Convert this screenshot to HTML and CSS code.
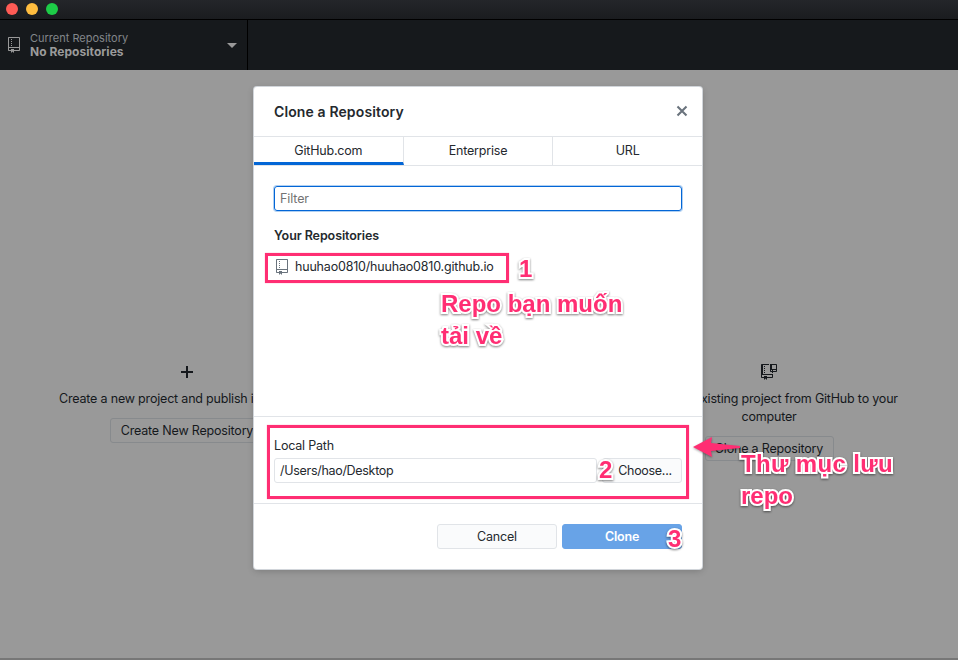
FILE: index.html
```html
<!DOCTYPE html>
<html lang="vi">
<head>
<meta charset="utf-8">
<title>GitHub Desktop</title>
<link rel="stylesheet" href="styles.css">
</head>
<body>
<div class="window">
  <header class="titlebar"><i class="light red"></i><i class="light yellow"></i><i class="light green"></i></header>
  <nav class="toolbar">
    <div class="repo-picker">
      <svg class="repo-icon" width="12" height="16" viewBox="0 0 12 16"><path fill="currentColor" fill-rule="evenodd" d="M4 9H3V8h1v1zm0-3H3v1h1V6zm0-2H3v1h1V4zm0-2H3v1h1V2zm8-1v12c0 .55-.45 1-1 1H6v2l-1.500-1.500L3 16v-2H1c-.55 0-1-.45-1-1V1c0-.55.45-1 1-1h10c.55 0 1 .45 1 1zm-1 10H1v2h2v-1h3v1h5v-2zm0-10H1v9h10V1z"/></svg>
      <div class="repo-label"><span class="current">Current Repository</span><b>No Repositories</b></div>
      <i class="caret"></i>
    </div>
  </nav>
  <main class="blank">
    <section class="option">
      <svg class="option-icon" width="14" height="14" viewBox="0 0 14 14"><path d="M7 1v12M1 7h12" stroke="currentColor" stroke-width="2"/></svg>
      <p class="create-text">Create a new project and publish it to GitHub</p>
      <button class="option-btn create-btn">Create New Repository</button>
    </section>
    <section class="option">
      <svg class="option-icon clone-icon" width="16" height="16" viewBox="0 0 16 16"><path fill="currentColor" fill-rule="evenodd" d="M15 0H9v7c0 .55.45 1 1 1h1v1h1V8h3c.55 0 1-.45 1-1V1c0-.55-.45-1-1-1zm-4 7h-1V6h1v1zm4 0h-3V6h3v1zm0-2h-4V1h4v4zM4 5H3V4h1v1zm0-2H3V2h1v1zM2 1h6V0H1C.45 0 0 .45 0 1v12c0 .55.45 1 1 1h2v2l1.500-1.500L6 16v-2h5c.55 0 1-.45 1-1v-3H2V1zm9 10v2H6v-1H3v1H1v-2h10zM3 8h1v1H3V8zm1-1H3V6h1v1z"/></svg>
      <p class="clone-text">Clone an existing project from GitHub to your<br>computer</p>
      <button class="option-btn clone-btn">Clone a Repository</button>
    </section>
  </main>
</div>

<div class="dialog">
  <header class="dialog-head"><h1>Clone a Repository</h1>
    <svg class="close" width="12" height="12" viewBox="0 0 12 12"><path d="M1.500 1.500l9 9M10.500 1.500l-9 9" stroke="currentColor" stroke-width="2.100"/></svg>
  </header>
  <div class="tabs"><span class="tab active">GitHub.com</span><span class="tab">Enterprise</span><span class="tab">URL</span></div>
  <div class="list">
    <div class="filter">Filter</div>
    <h2>Your Repositories</h2>
    <div class="repo-row">
      <svg width="12" height="16" viewBox="0 0 12 16"><path fill="currentColor" fill-rule="evenodd" d="M4 9H3V8h1v1zm0-3H3v1h1V6zm0-2H3v1h1V4zm0-2H3v1h1V2zm8-1v12c0 .55-.45 1-1 1H6v2l-1.500-1.500L3 16v-2H1c-.55 0-1-.45-1-1V1c0-.55.45-1 1-1h10c.55 0 1 .45 1 1zm-1 10H1v2h2v-1h3v1h5v-2zm0-10H1v9h10V1z"/></svg>
      <span>huuhao0810/huuhao0810.github.io</span>
    </div>
  </div>
  <div class="path">
    <label><span>Local Path</span></label>
    <div class="path-row"><div class="path-input"><span>/Users/hao/Desktop</span></div><button class="choose">Choose...</button></div>
  </div>
  <footer class="actions"><button class="cancel">Cancel</button><button class="primary">Clone</button></footer>
</div>

<div class="frame frame-repo"></div>
<div class="frame frame-path"></div>
<svg class="arrow" width="52" height="26" viewBox="0 0 52 26"><path d="M1 12L20 2l-1 6 29 3v2l-29 3 1 6z" fill="#ff2e73"/></svg>
<div class="note n1">1</div>
<div class="note n2">2</div>
<div class="note n3">3</div>
<div class="note n-repo"><span>Repo bạn muốn</span><br><span>tải về</span></div>
<div class="note n-path"><span class="wide">Thư mục lưu</span><br><span>repo</span></div>
</body>
</html>
```
FILE: styles.css
```css
* { box-sizing: border-box; }
body { margin: 0; width: 958px; height: 660px; overflow: hidden; position: relative; background: #999; color: #24292e; font: 12.5px/18px Inter, "Noto Sans", sans-serif; letter-spacing: -.19px; }
h1, h2, p { margin: 0; }
button { font: inherit; letter-spacing: inherit; color: inherit; padding: 0; border: 1px solid #e1e4e8; border-radius: 3px; background: #fafbfc; height: 25px; }

.window { height: 660px; display: flex; flex-direction: column; color: #15181c; border-bottom: 2px solid #777; }
.titlebar { height: 20px; flex: none; display: flex; gap: 8px; padding: 3px 6px; background: linear-gradient(#24262a, #1a1c1f); border-bottom: 1px solid #000; }
.light { width: 12px; height: 12px; border-radius: 50%; }
.red { background: #ff5b55; }
.yellow { background: #ffbd3f; }
.green { background: #1dcc47; }
.toolbar { height: 50px; flex: none; background: #16191c; }
.repo-picker { width: 248px; height: 50px; border-right: 1px solid #000; display: flex; align-items: center; padding: 0 10px 0 8px; color: #999; }
.repo-label { margin-left: 10px; flex: 1; font-size: 11px; line-height: 13px; display: flex; flex-direction: column; align-items: flex-start; }
.repo-label .current { color: #82868a; letter-spacing: 0; }
.repo-label b { font-size: 12px; color: #9b9b9b; letter-spacing: .05px; }
.caret { border: 5px solid transparent; border-top: 5px solid #999; border-bottom: 0; }
.blank { display: flex; justify-content: space-between; padding: 295px 43px 0 41px; }
.option { width: 292px; display: flex; flex-direction: column; align-items: center; text-align: center; white-space: nowrap; }
.option-icon { height: 14px; margin-bottom: 11px; }
.clone-icon { height: 16px; margin: -1px 0 10px; }
.option-btn { margin-top: 10px; background: transparent; border-color: #878a8d; }
.create-btn { width: 154px; }
.clone-btn { width: 129px; }

.dialog { position: absolute; left: 254px; top: 87px; width: 448px; height: 482px; background: #fff; border-radius: 3px; box-shadow: 0 0 0 1px #d1d5da, 0 2px 7px rgba(0,0,0,.2); display: flex; flex-direction: column; }
.dialog-head { height: 50px; border-bottom: 1px solid #e1e4e8; display: flex; justify-content: space-between; align-items: center; padding: 0 14px 0 20px; }
h1 { font-size: 14px; font-weight: 600; letter-spacing: .12px; }
.close { color: #6a737d; margin-top: -1px; }
.tabs { display: flex; height: 29px; border-bottom: 1px solid #e1e4e8; }
.tab { flex: 1; text-align: center; line-height: 27px; border-right: 1px solid #e1e4e8; }
.tab:last-child { border-right: 0; }
.active { border-bottom: 3px solid #0366d6; }
.list { height: 251px; padding: 20px; border-bottom: 1px solid #e1e4e8; }
.filter { height: 25px; border: 1px solid #0366d6; border-radius: 3px; box-shadow: 0 0 0 1px #b0d0f2; padding: 0 5px; line-height: 23px; color: #737373; letter-spacing: -.1px; }
h2 { font-size: 12.5px; line-height: 18px; font-weight: 600; margin-top: 16px; letter-spacing: -.08px; }
.repo-row { display: flex; align-items: center; margin-top: 13px; padding-left: 2px; gap: 7px; }
.repo-row svg { color: #6a737d; }
.path { height: 87px; border-bottom: 1px solid #e1e4e8; padding: 20px 20px 0; }
.path label { display: block; line-height: 18px; }
.path-row { display: flex; margin-top: 3px; gap: 5px; letter-spacing: -.3px; }
.path-input { flex: 1; height: 25px; border: 1px solid #e1e4e8; border-radius: 3px; padding-left: 5px; line-height: 23px; }
.choose { width: 80px; padding-left: 6px; }
.actions { display: flex; justify-content: flex-end; gap: 5px; padding: 20px 20px 0; }
.actions button { width: 120px; }
.actions .primary { background: #68a3e7; border-color: #68a3e7; color: #fff; font-weight: 600; }

.frame { position: absolute; border: 3px solid #ff2e73; box-shadow: 0 0 1px #ff8fb3; }
.frame-repo { left: 265px; top: 253px; width: 244px; height: 30px; }
.frame-path { left: 267px; top: 425px; width: 422px; height: 74px; }
.arrow { position: absolute; left: 692px; top: 435px; filter: drop-shadow(0 1px 1px rgba(0,0,0,.35)); }
.note { position: absolute; font: bold 24px/32px "Liberation Sans", Arial, sans-serif; letter-spacing: 0; color: #ff2e73; white-space: nowrap; -webkit-text-stroke: 4px #fff; paint-order: stroke fill; stroke-linejoin: round; filter: drop-shadow(0 1px 1px rgba(0,0,0,.5)); }
.n1 { left: 519px; top: 253px; }
.n2 { left: 599px; top: 454px; }
.n3 { left: 668px; top: 523px; }
.n-repo { left: 441px; top: 288px; }
.n-path { left: 741px; top: 448px; }
.wide { letter-spacing: .35px; }
```
